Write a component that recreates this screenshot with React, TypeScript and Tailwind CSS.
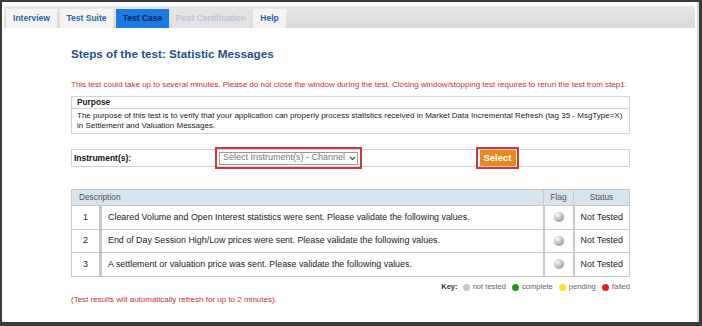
import React from "react";

const tabs = [
  { label: "Interview", w: "w-[51px]", state: "normal" },
  { label: "Test Suite", w: "w-[53px]", state: "normal" },
  { label: "Test Case", w: "w-[53px]", state: "active" },
  { label: "Post Certification", w: "w-[78px]", state: "disabled" },
  { label: "Help", w: "w-[33px]", state: "normal" },
];

const steps = [
  "Cleared Volume and Open Interest statistics were sent. Please validate the following values.",
  "End of Day Session High/Low prices were sent. Please validate the following values.",
  "A settlement or valuation price was sent. Please validate the following values.",
];

const Dot = ({ color }: { color: string }) => (
  <span className={`inline-block h-[7px] w-[7px] rounded-full ${color}`} />
);

export default function App() {
  return (
    <div className="h-[326px] w-[702px] bg-[#3a3a3a] pt-[2px] pl-[2px] pr-[3px] pb-[4px] font-['Liberation_Sans',Arial,sans-serif]">
      <div className="flex h-full flex-col bg-white pt-[4px] pl-[2px] pr-[2px] border-r-2 border-[#d8d8d8]">
        {/* tab bar */}
        <div className="flex h-[22px] shrink-0 items-end gap-[3px] rounded-t-[3px] bg-gradient-to-b from-[#e8e8e8] to-[#d8d8d8] pl-[2px]">
          {tabs.map((t) => (
            <div
              key={t.label}
              className={`flex h-[19px] ${t.w} items-center justify-center text-[8.5px] font-bold ${
                t.state === "active"
                  ? "bg-[#1b7ae4] text-[#0b2452]"
                  : t.state === "disabled"
                  ? "bg-[#e4e4e4] text-[#bac6d6]"
                  : "bg-[#f4f4f4] text-[#2b63ae]"
              }`}
            >
              {t.label}
            </div>
          ))}
        </div>

        <div className="ml-[67px] flex w-[559px] flex-col">
          <div className="mt-[18px] h-[16px] text-[11.7px] font-bold leading-[16px] text-[#1f4f8f]">
            Steps of the test: Statistic Messages
          </div>

          <div className="mt-[18px] h-[10px] whitespace-nowrap text-[8px] leading-[10px] text-[#c8302c]">
            This test could take up to several minutes. Please do not close the window during the test. Closing
            window/stopping test requires to rerun the test from step1.
          </div>

          <div className="mt-[6px] h-[38px] border border-[#d4d4d4] text-[8px] text-[#222]">
            <div className="h-[12px] border-b border-[#d4d4d4] px-[5px] text-[8.3px] font-bold leading-[11px]">
              Purpose
            </div>
            <div className="px-[5px] pt-[2px] leading-[10px]">
              The purpose of this test is to verify that your application can properly process statistics received in
              Market Data Incremental Refresh (tag 35 - MsgType=X) in Settlement and Valuation Messages.
            </div>
          </div>

          <div className="mt-[15px] flex h-[18px] items-center border border-[#d4d4d4] text-[8.5px]">
            <span className="w-[143px] pl-[2px] font-bold text-[#111]">Instrument(s):</span>
            <div className="-my-[2px] flex h-[22px] w-[147px] items-center border-[2px] border-[#d6343a] px-[2px]">
              <div className="flex h-[13px] w-full items-center justify-between border border-[#9a9a9a] pl-[3px] pr-[1px] text-[9px] text-[#777]">
                <span>Select Instrument(s) - Channel</span>
                <svg width="7" height="5" viewBox="0 0 7 5">
                  <path d="M1 1 L3.5 3.5 L6 1" fill="none" stroke="#444" strokeWidth="1.2" />
                </svg>
              </div>
            </div>
            <div className="ml-[114px] -my-[2px] flex h-[22px] w-[43px] items-center justify-center border-[2px] border-[#d6343a]">
              <div className="flex h-[16px] w-[36px] items-center justify-center bg-[#e88a1a] text-[9.5px] font-bold text-white">
                Select
              </div>
            </div>
          </div>

          <table className="mt-[22px] w-full border-collapse text-[8.9px] text-[#222]">
            <thead>
              <tr className="h-[16px] bg-[#d5e4ee] text-[#555]">
                <th colSpan={2} className="border border-[#c8c8c8] pl-[7px] text-left text-[8.3px] font-normal">
                  Description
                </th>
                <th className="w-[30px] border border-[#c8c8c8] text-[8.3px] font-normal">Flag</th>
                <th className="w-[56px] border border-[#c8c8c8] text-[8.3px] font-normal">Status</th>
              </tr>
            </thead>
            <tbody>
              {steps.map((s, i) => (
                <tr key={i} className="h-[23.5px]">
                  <td className="w-[29px] border border-[#c8c8c8] border-r-[3px] text-center">{i + 1}</td>
                  <td className="border border-[#c8c8c8] pl-[6px]">{s}</td>
                  <td className="border border-[#c8c8c8] border-l-[2px] text-center">
                    <span className="inline-block h-[10px] w-[10px] rounded-full bg-[radial-gradient(circle_at_35%_30%,#fafafa,#b0b0b0_60%,#7a7a7a)] align-middle" />
                  </td>
                  <td className="border border-[#c8c8c8] border-l-[2px] text-center">Not Tested</td>
                </tr>
              ))}
            </tbody>
          </table>

          <div className="mt-[6px] flex h-[9px] items-center justify-end gap-[3px] text-[7.6px] text-[#666]">
            <span className="mr-[2px] font-bold text-[#333]">Key:</span>
            <Dot color="bg-[#c8c8c8]" />
            <span className="mr-[3px]">not tested</span>
            <Dot color="bg-[#1a9a1a]" />
            <span className="mr-[3px]">complete</span>
            <Dot color="bg-[#f4e81a]" />
            <span className="mr-[3px]">pending</span>
            <Dot color="bg-[#e02020]" />
            <span>failed</span>
          </div>

          <div className="mt-[3px] h-[10px] text-[8px] leading-[10px] text-[#c8302c]">
            (Test results will automatically refresh for up to 2 minutes).
          </div>
        </div>
      </div>
    </div>
  );
}
